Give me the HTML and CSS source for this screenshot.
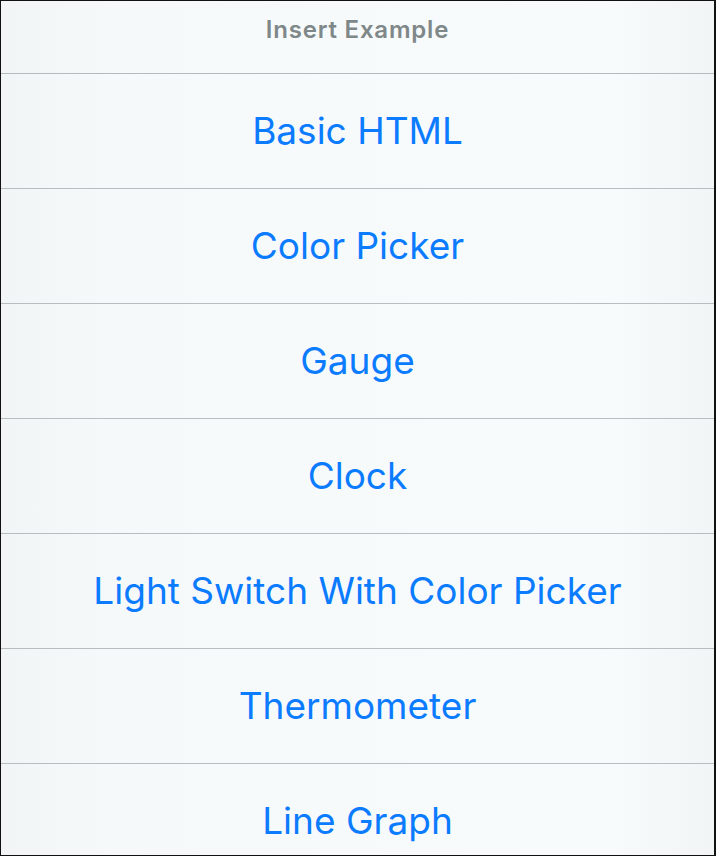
FILE: index.html
```html
<!DOCTYPE html>
<html>
<head>
<meta charset="utf-8">
<link rel="stylesheet" href="styles.css">
</head>
<body>
<div class="sheet">
  <div class="header">Insert Example</div>
  <ul class="list">
    <li class="item">Basic HTML</li>
    <li class="item">Color Picker</li>
    <li class="item">Gauge</li>
    <li class="item">Clock</li>
    <li class="item">Light Switch With Color Picker</li>
    <li class="item">Thermometer</li>
    <li class="item">Line Graph</li>
  </ul>
</div>
</body>
</html>
```
FILE: styles.css
```css
html, body {
  margin: 0;
  padding: 0;
  background: #f3f7f8;
}
.sheet {
  box-sizing: border-box;
  width: 716px;
  height: 856px;
  border: 1px solid #111;
  border-right-width: 2px;
  overflow: hidden;
  background: linear-gradient(90deg, #f1f5f6 0%, #f6f9fa 15%, #f8fbfc 85%, #f1f5f6 100%);
  font-family: Inter, "Noto Sans", sans-serif;
}
.header {
  height: 73px;
  box-sizing: border-box;
  padding-top: 14px;
  text-align: center;
  font-size: 24px;
  font-weight: 600;
  letter-spacing: 0.8px;
  color: #7f8889;
  border-bottom: 1px solid #b4bbbc;
}
.list {
  list-style: none;
  margin: 0;
  padding: 0;
}
.item {
  height: 114px;
  display: flex;
  align-items: center;
  justify-content: center;
  padding-bottom: 2px;
  box-sizing: border-box;
  height: 115px;
  font-size: 37px;
  color: #0b7bff;
  border-bottom: 1px solid #b8bebf;
}
```
